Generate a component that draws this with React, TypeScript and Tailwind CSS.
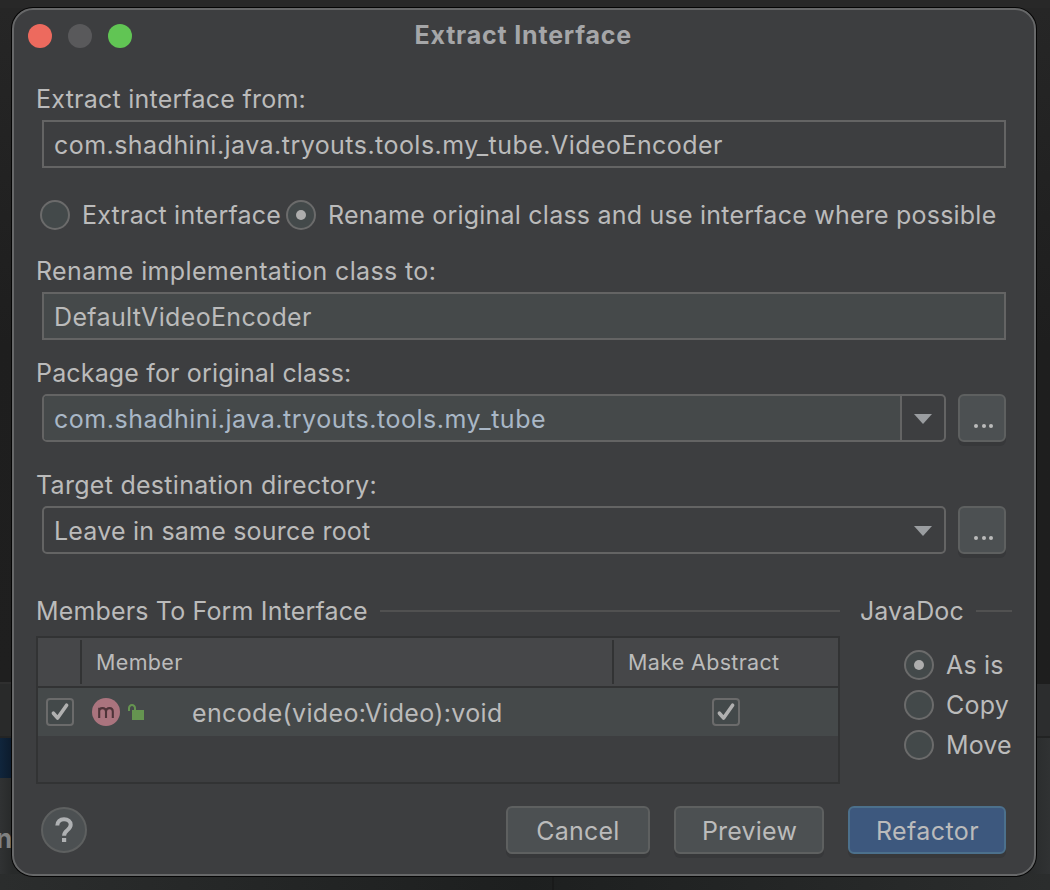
import React, { type ReactNode } from "react";

function Label({ children, className = "" }: { children: ReactNode; className?: string }) {
  return <div className={`h-[30px] pl-[22px] leading-[30px] whitespace-nowrap ${className}`}>{children}</div>;
}

function Radio({ checked = false }: { checked?: boolean }) {
  return (
    <span className="flex size-[30px] shrink-0 items-center justify-center rounded-full border-2 border-[#6b6b6b] bg-[#43494a]">
      {checked && <span className="size-[10px] rounded-full bg-[#adadad]" />}
    </span>
  );
}

function Checkbox() {
  return (
    <span className="flex size-[28px] shrink-0 items-center justify-center rounded-[4px] border-2 border-[#6b6b6b] bg-[#43494a]">
      <svg width="24" height="24" viewBox="0 0 24 24" fill="none" stroke="#b0b0b0" strokeWidth="3.6" strokeLinecap="round" strokeLinejoin="round">
        <path d="M5.4 13.2 L9.6 18 L18.6 5.2" />
      </svg>
    </span>
  );
}

function Arrow() {
  return (
    <svg width="18" height="10" viewBox="0 0 18 10" className="shrink-0">
      <path d="M0 0 H18 L9 10 Z" fill="#9a9da0" />
    </svg>
  );
}

function BrowseButton() {
  return (
    <button className="ml-3 flex h-12 w-12 shrink-0 items-end justify-center gap-[3.6px] rounded-[6px] border-2 border-[#5e6060] bg-[#4c5052] pb-[12px] pl-[3px] shadow-[0_4px_0_#37383a]">
      <span className="size-[4px] rounded-full bg-[#bbbbbb]" />
      <span className="size-[4px] rounded-full bg-[#bbbbbb]" />
      <span className="size-[4px] rounded-full bg-[#bbbbbb]" />
    </button>
  );
}

function Backdrop() {
  return (
    <div className="absolute inset-0 flex flex-col bg-[#242424]">
      <div className="h-[8px] bg-[#282828]" />
      <div className="flex h-[866px] justify-between">
        <div className="flex w-[30px] flex-col">
          <div className="h-[674px] bg-linear-to-b from-[#262626] via-[#1e1e1e] to-[#1f1f1f]" />
          <div className="h-[2px] bg-[#2f2f2f]" />
          <div className="h-[52px] bg-[#292a2a]" />
          <div className="h-[2px] bg-[#232424]" />
          <div className="h-[40px] bg-linear-to-r from-[#10253c] to-[#0c1b2c] to-40%" />
          <div className="h-[96px] bg-linear-to-r from-[#303233] to-[#282a2a] to-40%">
            <div className="-ml-[4px] pt-[46px] text-[26px] leading-[30px] font-bold text-[#7f8080]">n</div>
          </div>
        </div>
        <div className="flex w-[30px] flex-col">
          <div className="h-[676px] bg-linear-to-b from-[#262626] via-[#1e1e1e] to-[#1e1e1e]" />
          <div className="h-[52px] bg-[#2c2d2e]" />
          <div className="h-[2px] bg-[#222323]" />
          <div className="h-[136px] bg-linear-to-l from-[#303233] to-[#262828]" />
        </div>
      </div>
      <div className="flex h-[16px] justify-center bg-linear-to-r from-[#2b2d2d] via-[#1d1f1f] to-[#2b2d2d]">
        <div className="ml-[56px] w-[2px] bg-[#191a1a]" />
      </div>
    </div>
  );
}

export default function App() {
  return (
    <div className="relative h-[890px] w-[1050px] overflow-hidden font-['Inter',sans-serif] text-[25px] text-[#bbbbbb]">
      <Backdrop />
      <div className="relative flex h-full pt-[8px] pl-[12px]">
        <div className="h-[868px] w-[1024px] rounded-[21px] border-2 border-[#676869] bg-[#3d3e40] shadow-[0_0_0_1px_#050505]">
          <header className="flex h-[52px] items-center">
            <div className="flex w-[400.5px] gap-4 pl-[14px]">
              <span className="size-6 rounded-full bg-[#ed6a5e]" />
              <span className="size-6 rounded-full bg-[#59595b]" />
              <span className="size-6 rounded-full bg-[#61c554]" />
            </div>
            <h1 className="-mt-[2px] leading-[30px] font-bold tracking-[0.8px] text-[#a5a6a8]">Extract Interface</h1>
          </header>

          <Label className="mt-[22px] tracking-[0.235px]">Extract interface from:</Label>
          <div className="mt-[6px] ml-[28px] flex h-12 w-[964px] items-center border-2 border-[#646464] pt-[2px] pl-[10px] leading-[30px] tracking-[0.46px]">
            com.shadhini.java.tryouts.tools.my_tube.VideoEncoder
          </div>

          <div className="mt-8 flex h-[30px] items-center pl-[26px] leading-[30px] whitespace-nowrap">
            <Radio />
            <span className="w-[216px] pl-[12px] tracking-[0.23px]">Extract interface</span>
            <Radio checked />
            <span className="ml-[12px] tracking-[0.225px]">Rename original class and use interface where possible</span>
          </div>

          <Label className="mt-[26px] tracking-[0.36px]">Rename implementation class to:</Label>
          <div className="mt-[6px] ml-[28px] flex h-12 w-[964px] items-center border-2 border-[#646464] bg-[#45494a] pt-[2px] pl-[10px] leading-[30px] tracking-[0.345px]">
            DefaultVideoEncoder
          </div>

          <Label className="mt-[18px] tracking-[0.16px]">Package for original class:</Label>
          <div className="mt-[6px] ml-[28px] flex">
            <div className="flex h-12 w-[904px] overflow-hidden rounded-[5px] border-2 border-[#646464]">
              <div className="flex w-[858px] items-center border-r-2 border-[#646464] bg-[#45494a] pt-[2px] pl-[10px] leading-[30px] tracking-[0.533px] text-[#a9b7c6]">
                com.shadhini.java.tryouts.tools.my_tube
              </div>
              <div className="flex flex-1 items-center justify-center pt-[2px]">
                <Arrow />
              </div>
            </div>
            <BrowseButton />
          </div>

          <Label className="mt-[28px] tracking-[0.28px]">Target destination directory:</Label>
          <div className="mt-[6px] ml-[28px] flex">
            <div className="flex h-12 w-[904px] items-center justify-between rounded-[5px] border-2 border-[#646464] pt-[2px] pr-[12px] pl-[10px]">
              <span className="leading-[30px] tracking-[0.2px]">Leave in same source root</span>
              <Arrow />
            </div>
            <BrowseButton />
          </div>

          <div className="mt-[42px] flex h-[188px] pl-[22px]">
            <section className="w-[804px]">
              <div className="flex h-[30px] items-center">
                <span className="w-[344px] leading-[30px] tracking-[0.16px]">Members To Form Interface</span>
                <span className="h-[2px] flex-1 bg-[#515151]" />
              </div>
              <div className="mt-[10px] h-[148px] border-2 border-[#323334]">
                <div className="flex h-[50px] items-center border-b-2 border-[#323334] bg-[#464749] text-[21.5px] leading-[26px]">
                  <span className="h-[44px] w-[44px] border-r-2 border-[#323334]" />
                  <span className="flex h-[44px] w-[532px] items-center border-r-2 border-[#323334] pl-[14px] tracking-[0.35px]">Member</span>
                  <span className="pl-[14px] tracking-[0.32px]">Make Abstract</span>
                </div>
                <div className="flex h-[48px] items-center bg-[#45494a] pl-[8px]">
                  <Checkbox />
                  <svg width="28" height="28" viewBox="0 0 28 28" className="ml-[18px] shrink-0">
                    <circle cx="14" cy="14" r="14" fill="#aa747e" />
                    <path d="M7.2 20 V9.8 M7.2 13 C7.2 11.2 8.5 10.1 10.5 10.1 C12.7 10.1 14 11.3 14 13.6 V20 M14 13.6 C14 11.3 15.4 10.1 17.5 10.1 C19.6 10.1 20.8 11.3 20.8 13.6 V20" fill="none" stroke="#4e3439" strokeWidth="2.1" />
                  </svg>
                  <svg width="16" height="16" viewBox="0 0 16 16" className="ml-[8px] shrink-0">
                    <path d="M4 6 H16 V16 H4 Z" fill="#659450" />
                    <path d="M1 7 V4.2 A3 3 0 0 1 4 1.1 A3 3 0 0 1 7 4.2 V7" fill="none" stroke="#659450" strokeWidth="2" />
                  </svg>
                  <span className="w-[568px] pt-[2px] pl-[48px] leading-[30px] tracking-[0.345px]">encode(video:Video):void</span>
                  <Checkbox />
                </div>
              </div>
            </section>

            <section className="ml-5 w-[152px]">
              <div className="flex h-[30px] items-center">
                <span className="w-[116px] leading-[30px] tracking-[0.08px]">JavaDoc</span>
                <span className="h-[2px] flex-1 bg-[#515151]" />
              </div>
              <div className="mt-6 flex flex-col gap-[10px] pl-[44px] leading-[30px] whitespace-nowrap">
                <div className="flex gap-[12px]">
                  <Radio checked />
                  <span className="tracking-[0.2px]">As is</span>
                </div>
                <div className="flex gap-[12px]">
                  <Radio />
                  <span className="tracking-[0.2px]">Copy</span>
                </div>
                <div className="flex gap-[12px]">
                  <Radio />
                  <span className="tracking-[0.1px]">Move</span>
                </div>
              </div>
            </section>
          </div>

          <footer className="mt-[22px] flex h-12 pr-[28px] pl-[27px]">
            <button className="mt-[1px] flex size-[46px] items-center justify-center rounded-full border-2 border-[#5e6060] bg-[#4c5052]">
              <svg width="18" height="26" viewBox="0 0 18 26" fill="none">
                <path d="M2.3 8.6 C2.3 4.6 5 2.3 9 2.3 C13 2.3 15.7 4.5 15.7 7.8 C15.7 10.5 14.2 11.7 12.3 13.2 C10.2 14.8 9.1 15.8 9.1 18.7" stroke="#afb1b3" strokeWidth="4" />
                <path d="M7 21 H11.2 V25 H7 Z" fill="#afb1b3" />
              </svg>
            </button>
            <button className="ml-auto w-[144px] rounded-[6px] border-2 border-[#5e6060] bg-[#4c5052] pt-[2px] leading-[30px] tracking-[0.214px] shadow-[0_4px_0_#37383a]">Cancel</button>
            <button className="ml-6 w-[150px] rounded-[6px] border-2 border-[#5e6060] bg-[#4c5052] pt-[2px] pl-[1px] leading-[30px] tracking-[0.204px] shadow-[0_4px_0_#37383a]">Preview</button>
            <button className="ml-6 w-[158px] rounded-[6px] border-2 border-[#4c708c] bg-[#3d587e] pt-[2px] pl-[1px] leading-[30px] tracking-[0.4px] shadow-[0_4px_0_#37383a]">Refactor</button>
          </footer>
        </div>
      </div>
    </div>
  );
}
